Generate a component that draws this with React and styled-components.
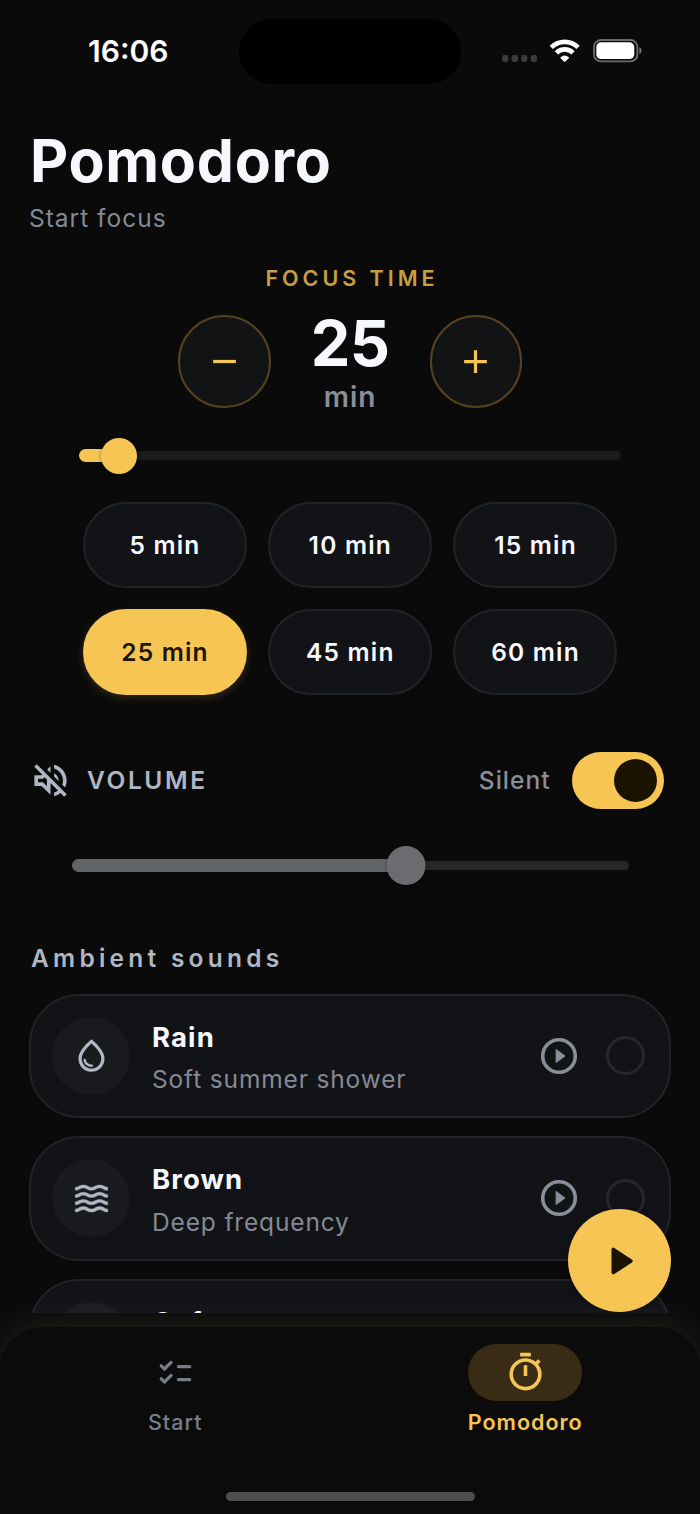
import React, { useState } from "react";
import styled, { createGlobalStyle } from "styled-components";
import {
  MdAdd,
  MdOutlineTimer,
  MdOutlineVolumeOff,
  MdOutlineWaterDrop,
  MdRemove,
  MdWaves,
} from "react-icons/md";

const GlobalStyle = createGlobalStyle`
  * {
    box-sizing: border-box;
  }
  body {
    margin: 0;
    background: #0a0a0a;
    font-family: Inter, "Liberation Sans", sans-serif;
  }
  button {
    font: inherit;
    padding: 0;
    border: none;
    background: none;
  }
  svg {
    display: block;
    flex: none;
  }
`;

const Phone = styled.div`
  position: relative;
  width: 700px;
  height: 1514px;
  display: flex;
  flex-direction: column;
  overflow: hidden;
  background: #0a0a0a;
  color: #f7f8fd;
`;

const StatusBar = styled.header`
  height: 102px;
  flex: none;
  display: grid;
  grid-template-columns: 239px 222px 239px;
`;

const Clock = styled.div`
  padding-left: 88px;
  line-height: 102px;
  font-size: 30px;
  font-weight: 600;
  letter-spacing: 0;
  color: #fff;
`;

const Island = styled.div`
  height: 65px;
  margin-top: 19px;
  border-radius: 33px;
  background: #000;
`;

const StatusIcons = styled.div`
  height: 102px;
  padding-left: 40px;
  display: flex;
  align-items: center;
`;

const Screen = styled.main`
  height: 1210.5px;
  flex: none;
  overflow: hidden;
  padding: 28px 29px 0;
`;

const Title = styled.h1`
  margin: 0 0 0 1px;
  font-size: 59px;
  line-height: 62px;
  font-weight: 700;
  letter-spacing: 0.7px;
`;

const Subtitle = styled.p`
  margin: 10px 0 0;
  font-size: 24.5px;
  line-height: 32px;
  letter-spacing: 1px;
  color: #858996;
`;

const Timer = styled.section`
  display: flex;
  flex-direction: column;
  align-items: center;
`;

const TimerLabel = styled.div`
  margin-top: 31.5px;
  height: 24px;
  line-height: 24px;
  font-size: 21.5px;
  font-weight: 600;
  letter-spacing: 4px;
  padding-left: 4px;
  color: #c79f43;
`;

const Stepper = styled.div`
  margin-top: 25.9px;
  width: 344px;
  height: 92.5px;
  display: flex;
  justify-content: space-between;
`;

const StepButton = styled.button`
  width: 92.5px;
  height: 92.5px;
  border-radius: 50%;
  border: 2px solid #56421f;
  background: #121315;
  color: #f7c553;
  display: flex;
  align-items: center;
  justify-content: center;
`;

const StepValue = styled.div`
  display: flex;
  flex-direction: column;
  align-items: center;
`;

const Minutes = styled.div`
  height: 56px;
  line-height: 57px;
  font-size: 63px;
  font-weight: 700;
  letter-spacing: -0.6px;
`;

const Unit = styled.div`
  margin-top: 9px;
  line-height: 34px;
  font-size: 28px;
  font-weight: 600;
  letter-spacing: 0.9px;
  color: #8a8e9b;
`;

const Slider = styled.div`
  position: relative;
  display: flex;
  align-items: center;
  flex: none;
  width: ${(p) => p.$width}px;
  height: 40px;
`;

const Track = styled.div`
  flex: 1;
  height: 9px;
  border-radius: 5px;
  background: ${(p) => p.$color};
`;

const Fill = styled.div`
  position: absolute;
  left: 0;
  height: 13px;
  border-radius: 7px;
  background: ${(p) => p.$color};
`;

const Thumb = styled.div`
  position: absolute;
  width: ${(p) => p.$size}px;
  height: ${(p) => p.$size}px;
  border-radius: 50%;
  transform: translateX(-50%);
  background: ${(p) => p.$color};
  box-shadow: 0 1px 4px rgba(0, 0, 0, 0.35);
`;

const Presets = styled.div`
  margin-top: 26.5px;
  display: grid;
  grid-template-columns: repeat(3, 164px);
  gap: 21.3px;
`;

const Preset = styled.button`
  height: 85.5px;
  padding-left: 0.6px;
  border-radius: 43px;
  border: 2px solid ${(p) => (p.$active ? "#f7c553" : "#222327")};
  background: ${(p) => (p.$active ? "#f7c553" : "#121317")};
  color: ${(p) => (p.$active ? "#1c1500" : "#f7f8fd")};
  box-shadow: ${(p) => (p.$active ? "0 3px 9px rgba(247, 197, 83, 0.16)" : "none")};
  font-size: 24.5px;
  font-weight: 600;
  letter-spacing: 1.2px;
`;

const VolumeRow = styled.div`
  margin-top: 57px;
  padding: 0 7px 0 0;
  height: 57px;
  display: flex;
  align-items: center;
  color: #b0b6c4;
`;

const VolumeLabel = styled.span`
  flex: 1;
  margin-left: 15px;
  font-size: 24.5px;
  font-weight: 600;
  letter-spacing: 2.6px;
`;

const SilentLabel = styled.span`
  font-size: 24.5px;
  font-weight: 500;
  letter-spacing: 1px;
  color: #8a8e9b;
`;

const Switch = styled.button`
  width: 92.5px;
  height: 57px;
  margin-left: 21px;
  padding: 0 7px;
  border-radius: 29px;
  background: #f7c553;
  display: flex;
  align-items: center;
  justify-content: ${(p) => (p.$on ? "flex-end" : "flex-start")};
`;

const Knob = styled.span`
  width: 43px;
  height: 43px;
  border-radius: 50%;
  background: #1a1300;
`;

const VolumeSlider = styled.div`
  margin-top: 37px;
  display: flex;
  justify-content: center;
`;

const SectionTitle = styled.h2`
  margin: 56px 0 0 2px;
  height: 32px;
  line-height: 32px;
  font-size: 24.5px;
  font-weight: 600;
  letter-spacing: 4.25px;
  color: #b0b6c4;
`;

const SoundList = styled.div`
  margin-top: 20px;
  display: flex;
  flex-direction: column;
  gap: 18px;
`;

const SoundCard = styled.div`
  height: 124.5px;
  flex: none;
  padding: 0 24.5px 0 21px;
  border-radius: 50px;
  border: 2px solid #222327;
  background: #121317;
  display: flex;
  align-items: center;
`;

const SoundIcon = styled.div`
  width: 78px;
  height: 78px;
  border-radius: 50%;
  background: #191a1e;
  color: #b0b8c6;
  display: flex;
  align-items: center;
  justify-content: center;
`;

const SoundText = styled.div`
  flex: 1;
  height: 81px;
  margin-left: 22px;
`;

const SoundName = styled.div`
  margin-top: 2.2px;
  line-height: 38px;
  font-size: 27.5px;
  font-weight: 700;
  letter-spacing: 1.1px;
`;

const SoundHint = styled.div`
  margin-top: 5.4px;
  line-height: 36px;
  font-size: 24.5px;
  letter-spacing: 0.85px;
  color: #858996;
`;

const Radio = styled.span`
  width: 39px;
  height: 39px;
  margin-left: 28px;
  border-radius: 50%;
  border: 3.5px solid #26272b;
`;

const Fab = styled.button`
  position: absolute;
  left: 568px;
  top: 1209px;
  z-index: 3;
  width: 103.3px;
  height: 103.3px;
  border-radius: 50%;
  background: #f7c553;
  box-shadow: 0 0 6px rgba(0, 0, 0, 0.3);
  display: flex;
  align-items: center;
  justify-content: center;
`;

const NavBar = styled.nav`
  position: relative;
  z-index: 1;
  flex: 1;
  margin-top: 14px;
  border-radius: 42px 42px 0 0;
  background: #0b0b0b;
  box-shadow: 0 -6px 36px rgba(247, 238, 215, 0.09);
  display: flex;
  flex-direction: column;
  align-items: center;
`;

const Tabs = styled.div`
  width: 100%;
  height: 165.5px;
  padding-top: 17.5px;
  display: grid;
  grid-template-columns: 1fr 1fr;
`;

const Tab = styled.div`
  display: flex;
  flex-direction: column;
  align-items: center;
  color: ${(p) => (p.$active ? "#f7c553" : "#787d8a")};
`;

const TabPill = styled.div`
  width: 114px;
  height: 57px;
  border-radius: 29px;
  background: ${(p) => (p.$active ? "#3a2b14" : "transparent")};
  display: flex;
  align-items: center;
  justify-content: center;
`;

const TabLabel = styled.div`
  margin-top: 7px;
  padding-left: 0.5px;
  line-height: 28px;
  font-size: 21.5px;
  font-weight: ${(p) => (p.$active ? 600 : 500)};
  letter-spacing: 1px;
`;

const HomeIndicator = styled.div`
  width: 249px;
  height: 9px;
  border-radius: 5px;
  background: #4d4d4d;
`;

const StatusGlyphs = () => (
  <svg width="142" height="26" viewBox="501 38 142 26" fill="none">
    <g fill="#3c3c3c">
      <rect x="502" y="55" width="6.4" height="7" rx="2.4" />
      <rect x="511.6" y="55" width="6.4" height="7" rx="2.4" />
      <rect x="521" y="55" width="6.4" height="7" rx="2.4" />
      <rect x="530.6" y="55" width="6.4" height="7" rx="2.4" />
    </g>
    <g stroke="#fff" strokeWidth="4.6">
      <path d="M551.3 47.3a19.2 19.2 0 0 1 26.8 0" />
      <path d="M556.4 52.8a11.8 11.8 0 0 1 16.6 0" />
    </g>
    <path
      d="M560.6 57.2a6.3 6.3 0 0 1 8.2 0q.5.5 0 1l-3.4 3.4q-.7.6-1.4 0l-3.4-3.4q-.5-.5 0-1z"
      fill="#fff"
    />
    <rect x="594" y="40" width="43.4" height="21.4" rx="7" stroke="#6b6b6b" strokeWidth="1.9" />
    <rect x="596.3" y="42.3" width="38" height="16.8" rx="4.8" fill="#fff" />
    <path d="M639.4 47.2q2.2 1 2.2 3.4t-2.2 3.4z" fill="#757575" />
  </svg>
);

const PreviewIcon = () => (
  <svg width="38" height="38" viewBox="0 0 38 38" fill="none">
    <circle cx="19" cy="19" r="16.3" stroke="#8a8e9b" strokeWidth="3.6" />
    <path d="M16.1 12.4 25 19l-8.9 6.6z" fill="#8a8e9b" stroke="#8a8e9b" strokeLinejoin="round" />
  </svg>
);

const PlayIcon = () => (
  <svg width="28" height="30" viewBox="0 0 28 30">
    <path
      d="M7.3 3.4v23.2L24.9 15z"
      fill="#1a1300"
      stroke="#1a1300"
      strokeWidth="3.6"
      strokeLinejoin="round"
    />
  </svg>
);

const ChecklistIcon = () => (
  <svg
    width="34"
    height="26"
    viewBox="0 0 34 26"
    fill="none"
    stroke="currentColor"
    strokeWidth="3.2"
    strokeLinecap="round"
  >
    <path d="m3.2 5.8 3.3 3.2 6.6-6.6" />
    <path d="m3.2 18.8 3.3 3.2 6.6-6.6" />
    <path d="M20.4 6.6h11.4M20.4 19.6h11.4" />
  </svg>
);

const presets = [5, 10, 15, 25, 45, 60];

const sounds = [
  { name: "Rain", hint: "Soft summer shower", icon: <MdOutlineWaterDrop size={39} /> },
  { name: "Brown", hint: "Deep frequency", icon: <MdWaves size={39} strokeWidth={0.2} /> },
  { name: "Cafe" },
];

const App = () => {
  const [minutes, setMinutes] = useState(25);
  const [silent, setSilent] = useState(true);

  // 25 minutes sits 39.5px from the left end of the track
  const focusX = 39.5 + (minutes - 25) * 2.1;

  return (
    <>
      <GlobalStyle />
      <Phone>
        <StatusBar>
          <Clock>16:06</Clock>
          <Island />
          <StatusIcons>
            <StatusGlyphs />
          </StatusIcons>
        </StatusBar>

        <Screen>
          <Title>Pomodoro</Title>
          <Subtitle>Start focus</Subtitle>

          <Timer>
            <TimerLabel>FOCUS TIME</TimerLabel>
            <Stepper>
              <StepButton onClick={() => setMinutes(Math.max(5, minutes - 5))}>
                <MdRemove size={39} />
              </StepButton>
              <StepValue>
                <Minutes>{minutes}</Minutes>
                <Unit>min</Unit>
              </StepValue>
              <StepButton onClick={() => setMinutes(minutes + 5)}>
                <MdAdd size={39} />
              </StepButton>
            </Stepper>
            <Slider $width={542} style={{ marginTop: 28 }}>
              <Track $color="#1a1b1d" />
              <Fill $color="#f7c553" style={{ width: focusX }} />
              <Thumb $size={36} $color="#f7c553" style={{ left: focusX }} />
            </Slider>
            <Presets>
              {presets.map((m) => (
                <Preset key={m} $active={m === minutes} onClick={() => setMinutes(m)}>
                  {m} min
                </Preset>
              ))}
            </Presets>
          </Timer>

          <VolumeRow>
            <MdOutlineVolumeOff size={43} />
            <VolumeLabel>VOLUME</VolumeLabel>
            <SilentLabel>Silent</SilentLabel>
            <Switch $on={silent} onClick={() => setSilent(!silent)}>
              <Knob />
            </Switch>
          </VolumeRow>
          <VolumeSlider>
            <Slider $width={557}>
              <Track $color="#272727" />
              <Fill $color="#636466" style={{ width: "60%" }} />
              <Thumb $size={39} $color="#6b6c70" style={{ left: "60%" }} />
            </Slider>
          </VolumeSlider>

          <SectionTitle>Ambient sounds</SectionTitle>
          <SoundList>
            {sounds.map((s) => (
              <SoundCard key={s.name}>
                <SoundIcon>{s.icon}</SoundIcon>
                <SoundText>
                  <SoundName>{s.name}</SoundName>
                  {s.hint && <SoundHint>{s.hint}</SoundHint>}
                </SoundText>
                <PreviewIcon />
                <Radio />
              </SoundCard>
            ))}
          </SoundList>
        </Screen>

        <NavBar>
          <Tabs>
            <Tab>
              <TabPill>
                <ChecklistIcon />
              </TabPill>
              <TabLabel>Start</TabLabel>
            </Tab>
            <Tab $active>
              <TabPill $active>
                <MdOutlineTimer size={43} />
              </TabPill>
              <TabLabel $active>Pomodoro</TabLabel>
            </Tab>
          </Tabs>
          <HomeIndicator />
        </NavBar>

        <Fab>
          <PlayIcon />
        </Fab>
      </Phone>
    </>
  );
};

export default App;
